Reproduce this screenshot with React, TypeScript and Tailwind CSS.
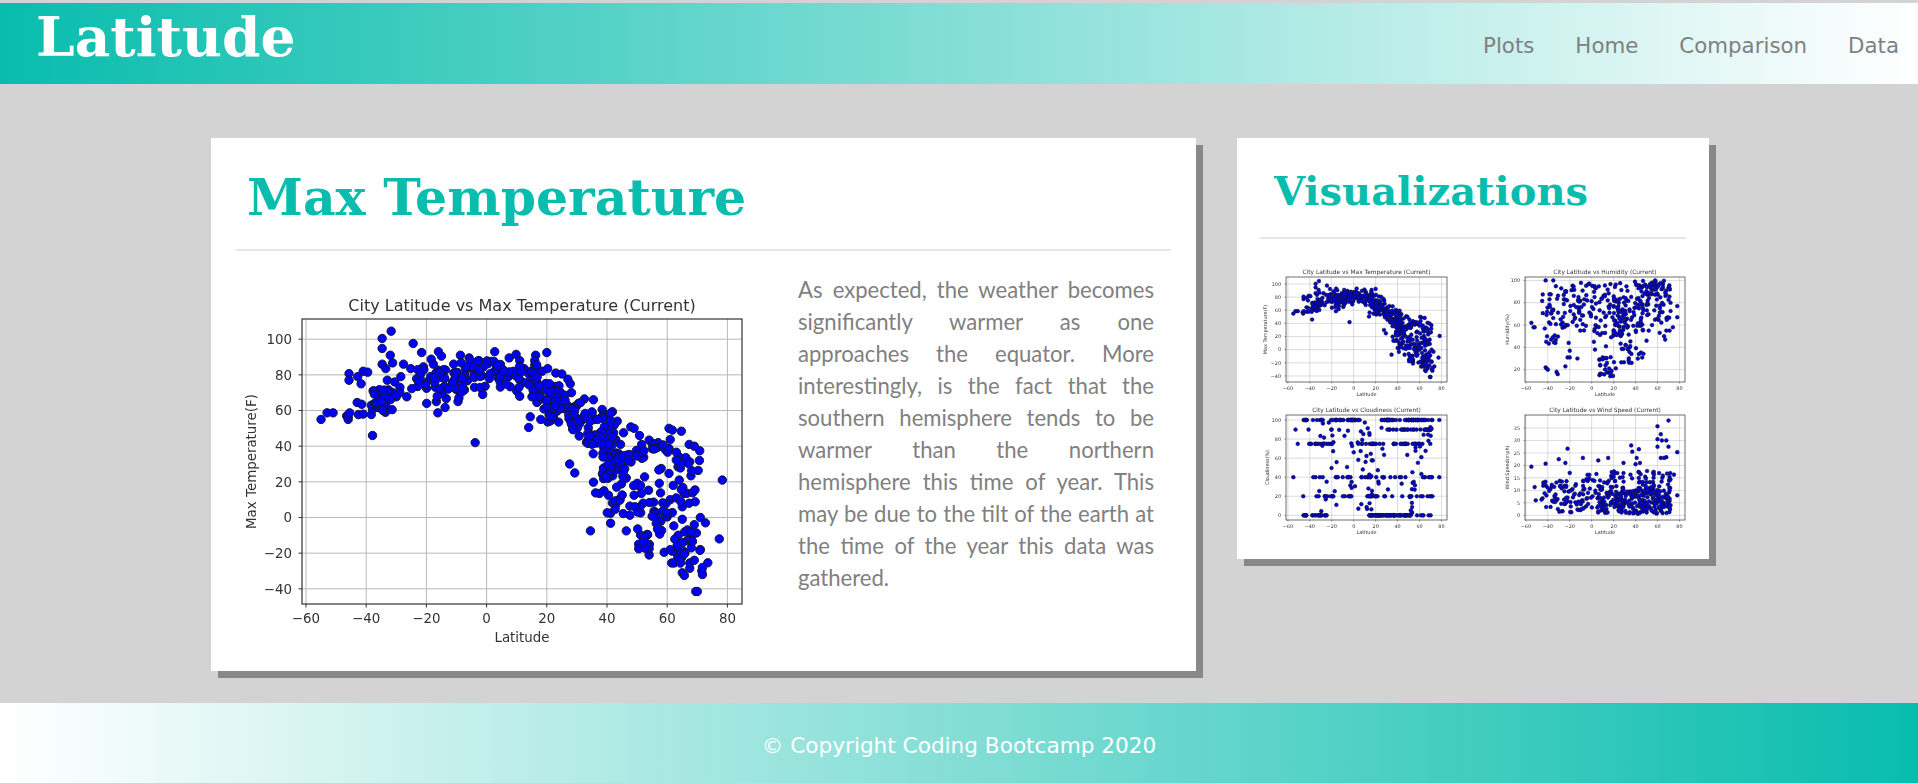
// Latitude / Max Temperature page
function mulberry(seed: number) {
  return () => {
    seed |= 0;
    seed = (seed + 0x6d2b79f5) | 0;
    let t = Math.imul(seed ^ (seed >>> 15), 1 | seed);
    t = (t + Math.imul(t ^ (t >>> 7), 61 | t)) ^ t;
    return ((t ^ (t >>> 14)) >>> 0) / 4294967296;
  };
}

type Pt = [number, number];
type Band = [number, number, number, number, number];

function scatter(seed: number, bands: Band[], fixed: Pt[]): Pt[] {
  const rnd = mulberry(seed);
  const out: Pt[] = [...fixed];
  bands.forEach(([x1, x2, y1, y2, n]) => {
    for (let i = 0; i < n; i++) {
      out.push([x1 + rnd() * (x2 - x1), y1 + rnd() * (y2 - y1)]);
    }
  });
  return out;
}

const tempPoints = scatter(
  7,
  [
    [-38, -30, 60, 72, 24],
    [-25, -10, 72, 83, 34],
    [-12, -2, 72, 88, 26],
    [-9, -6, 65, 80, 6],
    [-5, 4, 76, 88, 16],
    [3, 18, 72, 86, 48],
    [15, 26, 60, 76, 38],
    [20, 32, 52, 66, 38],
    [28, 42, 42, 60, 38],
    [33, 44, 34, 46, 24],
    [38, 47, 21, 35, 40],
    [40, 60, 2, 20, 20],
    [47, 53, 30, 38, 8],
    [51, 57, 36, 42, 8],
    [56, 71, 26, 42, 12],
    [55, 60, -14, 4, 10],
    [50, 56, -20, -6, 12],
    [62, 72, -20, -8, 18],
    [60, 66, -26, -18, 6],
    [64, 70, 10, 16, 4],
  ],
  [
    [-55, 55], [-53, 58.7], [-51, 58.7], [-46.5, 57], [-46, 55], [-46, 56.5], [-45.5, 58.7], [-45.7, 80.7], [-45.7, 77],
    [-42.8, 79], [-41.7, 75], [-41, 82], [-39.5, 81.5], [-43, 64.5], [-42.6, 57.7], [-41.5, 63.5], [-41, 58], [-38.3, 57.7],
    [-37.9, 46], [-38.3, 63], [-37.7, 71], [-37.2, 69.5], [-34.7, 100.4], [-31.7, 104.5], [-34.7, 94.8], [-32, 91], [-34.7, 86],
    [-31.2, 86.7], [-33.5, 83.5], [-33, 77], [-30.5, 76], [-28.5, 79], [-28.8, 73], [-27.6, 86], [-26.5, 67.7], [-30, 67.7],
    [-31.2, 70], [-33.8, 71.4], [-34, 67.7], [-33.5, 63], [-33.6, 59], [-35.5, 63], [-36, 65.8], [-34.4, 60.2], [-37.2, 64],
    [-35.5, 68.6], [-28.8, 70], [-24.4, 97.6], [-21.6, 92.5], [-18.4, 88.8], [-16, 93], [-15, 90.5], [-25.2, 83.5], [-21, 84.5],
    [-17.7, 86], [-15, 81.7], [-19.9, 64], [-16.7, 65], [-16.2, 58.7], [-13.8, 61.7], [-13.4, 66.7], [-14.7, 69.5], [-17, 73],
    [-16.4, 68], [-14, 73.6], [-9.5, 65], [-9.2, 67], [-9.4, 71], [-8.7, 91], [-5.8, 89.5], [-2.5, 88], [-3.8, 42], [-4, 73],
    [-1.3, 69], [-0.5, 73.6], [2.7, 93], [3.5, 84.5], [7.5, 89.5], [9.8, 91.5], [11, 88], [12.5, 83.5], [10, 71], [11, 68],
    [16.3, 91], [16, 88], [16, 85.5], [18.5, 82], [20, 92.5], [20.3, 83.5], [14, 50.5], [14.5, 56.5], [18, 55], [20.3, 53.6],
    [23, 81], [25, 80.5], [27, 77.5], [27.8, 75], [28.2, 70], [32.5, 66.5], [35.5, 66], [27.6, 30], [29.3, 25], [34.5, -7.5],
    [46.4, -7.5], [41.2, -3.2], [78.3, 21], [77.3, -12], [73.5, -25.4], [69.5, -41.5], [70, -41.5], [67.9, 23.4], [67.3, 8],
    [69.3, 8.8], [71, 0], [72.7, -3], [69, -4], [66.7, -7], [65, -1], [62.2, -4.7], [61.7, 2.8], [58, 27.5], [60.6, 24.7],
    [63.6, 28.4], [64, 21], [65.2, 16.8], [65.6, 13.5], [62, 18], [52.5, 22.8], [50.7, 17.6], [53.8, 15.3], [57.8, 13.8],
    [51.4, 13.5], [49, 12.5], [55.5, 8.6], [58.5, 3.5], [51.2, 2.6], [47.6, 1.3], [45.4, 2.2], [47.6, 6.4], [42.9, 7],
    [44.3, 10.6], [41.8, 8.2], [40.5, 12.5], [39, 15], [37.5, 13.5], [36.2, 13.8], [35.5, 19.8], [60.6, 50], [61.7, 49],
    [64.7, 48.4], [67.3, 41], [70.8, 37.4], [70.7, 32], [70.3, 26.4], [67.5, 31.2], [64, 34], [66.2, 33.6], [60.6, 38.7],
    [59.4, 38], [61, 43.7], [54, 43.4], [57, 42], [55, 41.5], [45.5, 47.5], [47.9, 50.8], [49, 50], [50.8, 46], [43.4, 54],
    [42.4, 51.8], [42.2, 47.5], [42.9, 43.7], [44.5, 41], [40, 57.4], [38.4, 60.6], [52, 8], [51, 6], [61, 10], [63, 11],
    [65, 6], [64.5, 9], [68, -17], [71, -18], [71.5, -30], [71.7, -32], [71.7, -28], [65, -31], [65.7, -32.5], [67.5, -28.5],
    [67.5, -25.5], [69, -24], [63.5, -22], [61.5, -25.5], [62.3, -25.5], [59, -19.5], [54, -21], [54, -17.5], [50.5, -15],
  ],
);

const humidityPoints = scatter(
  11,
  [
    [-46, -28, 42, 96, 34],
    [-28, 0, 55, 98, 62],
    [0, 28, 48, 98, 62],
    [6, 24, 14, 32, 24],
    [26, 48, 26, 46, 24],
    [20, 48, 50, 86, 80],
    [45, 72, 86, 100, 52],
    [42, 72, 62, 86, 40],
    [30, 45, 90, 100, 8],
  ],
  [
    [-55, 62], [-53, 58], [-52, 58], [78, 77], [78, 67], [-42, 22], [-41, 21], [-40, 20], [-32, 18], [-31, 16], [-20, 37],
    [-21, 44], [-24, 23], [-22, 31], [-20, 31], [-13, 30], [2, 45], [3, 38], [7, 29], [10, 31], [13, 41], [50, 46], [52, 55],
    [55, 60], [62, 53], [66, 50], [67, 47], [68, 55], [71, 55], [74, 58], [-42, 100], [-35, 100], [-33, 44], [-37, 47],
  ],
);

const row = (y: number, x1: number, x2: number, n: number): Band => [x1, x2, y, y, n];
const cloudPoints = scatter(
  23,
  [
    row(100, -46, -42, 6), row(100, -38, -28, 6), row(100, -21, 7, 30), row(100, 25, 72, 50),
    row(90, 30, 72, 24), row(90, -22, -20, 2), row(90, -42, -40, 1),
    row(75, -42, -28, 8), row(75, -25, -18, 4), row(75, 4, 30, 14), row(75, 35, 72, 22),
    row(40, -38, -28, 4), row(40, -20, 0, 8), row(40, 6, 30, 10), row(40, 32, 72, 12),
    row(20, -36, -18, 10), row(20, -10, -2, 6), row(20, 12, 30, 12), row(20, 35, 72, 12),
    row(0, -46, -22, 22), row(0, 14, 52, 70), row(0, 55, 72, 6),
    [-35, 72, 2, 98, 95],
  ],
  [[-55, 40], [-53, 90], [-51, 75], [78, 100], [78, 40], [-46, 20]],
);

const windPoints = scatter(
  31,
  [
    [-46, -20, 1, 14, 50],
    [-20, 5, 1, 14, 45],
    [5, 30, 1, 12, 80],
    [25, 72, 0.5, 11, 190],
    [35, 72, 10, 18, 40],
    [-10, 30, 12, 18, 25],
  ],
  [
    [-55, 19.5], [-52, 11.3], [-51, 6], [70, 38], [60, 35.7], [63, 32.5], [60, 30.5], [64, 30], [68, 30], [60, 27.5], [70, 27.5],
    [78, 25.3], [-22, 26.7], [36, 28], [43, 26.5], [-8, 23], [15, 23], [-30, 22.5], [6, 22], [-42, 20.7], [-24, 21], [37, 25.5],
    [41, 23], [44, 21], [29, 21], [40, 20.5], [63, 23], [66, 23], [68, 23.3], [-20, 17], [75, 16.3], [78, 8],
  ],
);

type ChartProps = {
  className?: string;
  w: number;
  h: number;
  plot: { l: number; r: number; t: number; b: number };
  x0: number;
  kx: number;
  y0: number;
  ky: number;
  yTicks: number[];
  points: Pt[];
  title: string;
  yLabel: string;
  dotR: number;
  dotFill: string;
  stroke: number;
  font: number;
  titleFont: number;
  titleY: number;
  tickY: number;
  tickX: number;
  labelY: number;
  yLabelX: number;
  tickLen: number;
  grid: number;
  axis: number;
};

const xTicks = [-60, -40, -20, 0, 20, 40, 60, 80];
const fmt = (v: number) => (v < 0 ? `\u2212${-v}` : `${v}`);

function Chart(p: ChartProps) {
  const { l, r, t, b } = p.plot;
  const cx = (l + r) / 2;
  return (
    <svg
      width={p.w}
      height={p.h}
      viewBox={`0 0 ${p.w} ${p.h}`}
      className={p.className}
      fontFamily="'DejaVu Sans', sans-serif"
      fill="#333333"
    >
      {xTicks.map((v) => {
        const x = p.x0 + v * p.kx;
        return (
          <g key={v}>
            <line x1={x} x2={x} y1={t} y2={b} stroke="#b8b8b8" strokeWidth={p.grid} />
            <line x1={x} x2={x} y1={b} y2={b + p.tickLen} stroke="#333" strokeWidth={p.grid} />
            <text x={x} y={p.tickY} fontSize={p.font} textAnchor="middle">
              {fmt(v)}
            </text>
          </g>
        );
      })}
      {p.yTicks.map((v) => {
        const y = p.y0 - v * p.ky;
        return (
          <g key={v}>
            <line x1={l} x2={r} y1={y} y2={y} stroke="#b8b8b8" strokeWidth={p.grid} />
            <line x1={l - p.tickLen} x2={l} y1={y} y2={y} stroke="#333" strokeWidth={p.grid} />
            <text x={p.tickX} y={y + p.font * 0.36} fontSize={p.font} textAnchor="end">
              {fmt(v)}
            </text>
          </g>
        );
      })}
      {p.points.map(([x, y], i) => (
        <circle
          key={i}
          cx={p.x0 + x * p.kx}
          cy={p.y0 - y * p.ky}
          r={p.dotR}
          fill={p.dotFill}
          stroke="#14143c"
          strokeWidth={p.stroke}
        />
      ))}
      <rect x={l} y={t} width={r - l} height={b - t} fill="none" stroke="#333" strokeWidth={p.axis} />
      <text x={cx} y={p.titleY} fontSize={p.titleFont} textAnchor="middle">
        {p.title}
      </text>
      <text x={cx} y={p.labelY} fontSize={p.font} textAnchor="middle">
        Latitude
      </text>
      <text
        x={p.yLabelX}
        y={(t + b) / 2}
        fontSize={p.font}
        textAnchor="middle"
        transform={`rotate(-90 ${p.yLabelX} ${(t + b) / 2})`}
      >
        {p.yLabel}
      </text>
    </svg>
  );
}

const small = {
  w: 200,
  h: 138,
  dotR: 1.85,
  dotFill: '#0000d8',
  stroke: 0.6,
  font: 4.9,
  titleFont: 5.9,
  titleY: 8,
  tickY: 124,
  labelY: 130,
  tickLen: 1.5,
  grid: 0.5,
  axis: 0.7,
  kx: 1.097,
  className: 'blur-[0.4px]',
};

export default function App() {
  return (
    <div className="flex h-[783px] flex-col overflow-hidden bg-[#d3d3d3] pt-[3px]">
      <header className="flex h-[81px] shrink-0 items-start justify-between bg-[linear-gradient(to_right,#08bdad,#ffffff)] pl-[36px] pr-[19px]">
        <h1 className="mt-[2px] font-['DejaVu_Serif'] text-[55px] font-bold leading-[64px] text-white">Latitude</h1>
        <nav className="mt-[29px] flex gap-[41px] font-['DejaVu_Sans'] text-[21.33px] leading-[28px] text-[#808080]">
          <a>Plots</a>
          <a>Home</a>
          <a>Comparison</a>
          <a>Data</a>
        </nav>
      </header>

      <main className="flex flex-1 items-start justify-center gap-[41px] pl-[2px] pt-[54px]">
        <section className="h-[533px] w-[985px] bg-white px-[25px] shadow-[7px_7px_0_#888888]">
          <h2 className="pl-[11px] pt-[30px] font-['DejaVu_Serif'] text-[50.5px] font-bold leading-[60px] text-[#08bdad]">
            Max Temperature
          </h2>
          <hr className="mt-[21px] border-t-2 border-[#e6e6e6]" />
          <div className="mt-[24px] flex items-start">
            <Chart
              className="mt-[15px] blur-[0.4px]"
              w={520}
              h={355}
              plot={{ l: 66, r: 506, t: 29, b: 314 }}
              x0={250.6}
              kx={3.01}
              y0={227.5}
              ky={1.783}
              yTicks={[-40, -20, 0, 20, 40, 60, 80, 100]}
              points={tempPoints}
              title="City Latitude vs Max Temperature (Current)"
              yLabel="Max Temperature(F)"
              dotR={4.2}
              dotFill="#0000ff"
              stroke={1}
              font={13.4}
              titleFont={16}
              titleY={21}
              tickY={333}
              tickX={56}
              labelY={352}
              yLabelX={20}
              tickLen={3.5}
              grid={1}
              axis={1.2}
            />
            <p className="ml-[42px] mt-[-1px] w-[356px] text-justify font-['Lato'] text-[22.1px] leading-[32px] text-[#808080]">
              As expected, the weather becomes significantly warmer as one approaches the equator. More interestingly, is
              the fact that the southern hemisphere tends to be warmer than the northern hemisphere this time of year. This
              may be due to the tilt of the earth at the time of the year this data was gathered.
            </p>
          </div>
        </section>

        <section className="h-[421px] w-[472px] bg-white px-[23px] shadow-[7px_7px_0_#888888]">
          <h2 className="pl-[14px] pt-[28px] font-['DejaVu_Serif'] text-[40px] font-bold leading-[50px] text-[#08bdad]">
            Visualizations
          </h2>
          <hr className="mt-[21px] border-t-2 border-[#e6e6e6]" />
          <div className="ml-[-6px] mt-[27px] grid grid-cols-[200px_200px] gap-x-[39px]">
            <Chart
              {...small}
              plot={{ l: 32, r: 193, t: 11, b: 116 }}
              x0={99.7}
              y0={83.7}
              ky={0.657}
              yTicks={[-40, -20, 0, 20, 40, 60, 80, 100]}
              points={tempPoints}
              title="City Latitude vs Max Temperature (Current)"
              yLabel="Max Temperature(F)"
              tickX={27}
              yLabelX={13}
            />
            <Chart
              {...small}
              plot={{ l: 32, r: 192, t: 11, b: 116 }}
              x0={98.7}
              y0={126}
              ky={1.116}
              yTicks={[20, 40, 60, 80, 100]}
              points={humidityPoints}
              title="City Latitude vs Humidity (Current)"
              yLabel="Humidity(%)"
              tickX={27}
              yLabelX={16}
            />
            <Chart
              {...small}
              plot={{ l: 32, r: 193, t: 11, b: 116 }}
              x0={99.7}
              y0={111.3}
              ky={0.953}
              yTicks={[0, 20, 40, 60, 80, 100]}
              points={cloudPoints}
              title="City Latitude vs Cloudiness (Current)"
              yLabel="Cloudiness(%)"
              tickX={27}
              yLabelX={15}
            />
            <Chart
              {...small}
              plot={{ l: 32, r: 192, t: 11, b: 116 }}
              x0={98.7}
              y0={111.3}
              ky={2.495}
              yTicks={[0, 5, 10, 15, 20, 25, 30, 35]}
              points={windPoints}
              title="City Latitude vs Wind Speed (Current)"
              yLabel="Wind Speed(mph)"
              tickX={27}
              yLabelX={16}
            />
          </div>
        </section>
      </main>

      <footer className="flex h-[80px] shrink-0 items-center justify-center bg-[linear-gradient(to_right,#ffffff,#08bdad)] pt-[6px] font-['DejaVu_Sans'] text-[21.6px] text-white">
        © Copyright Coding Bootcamp 2020
      </footer>
    </div>
  );
}
